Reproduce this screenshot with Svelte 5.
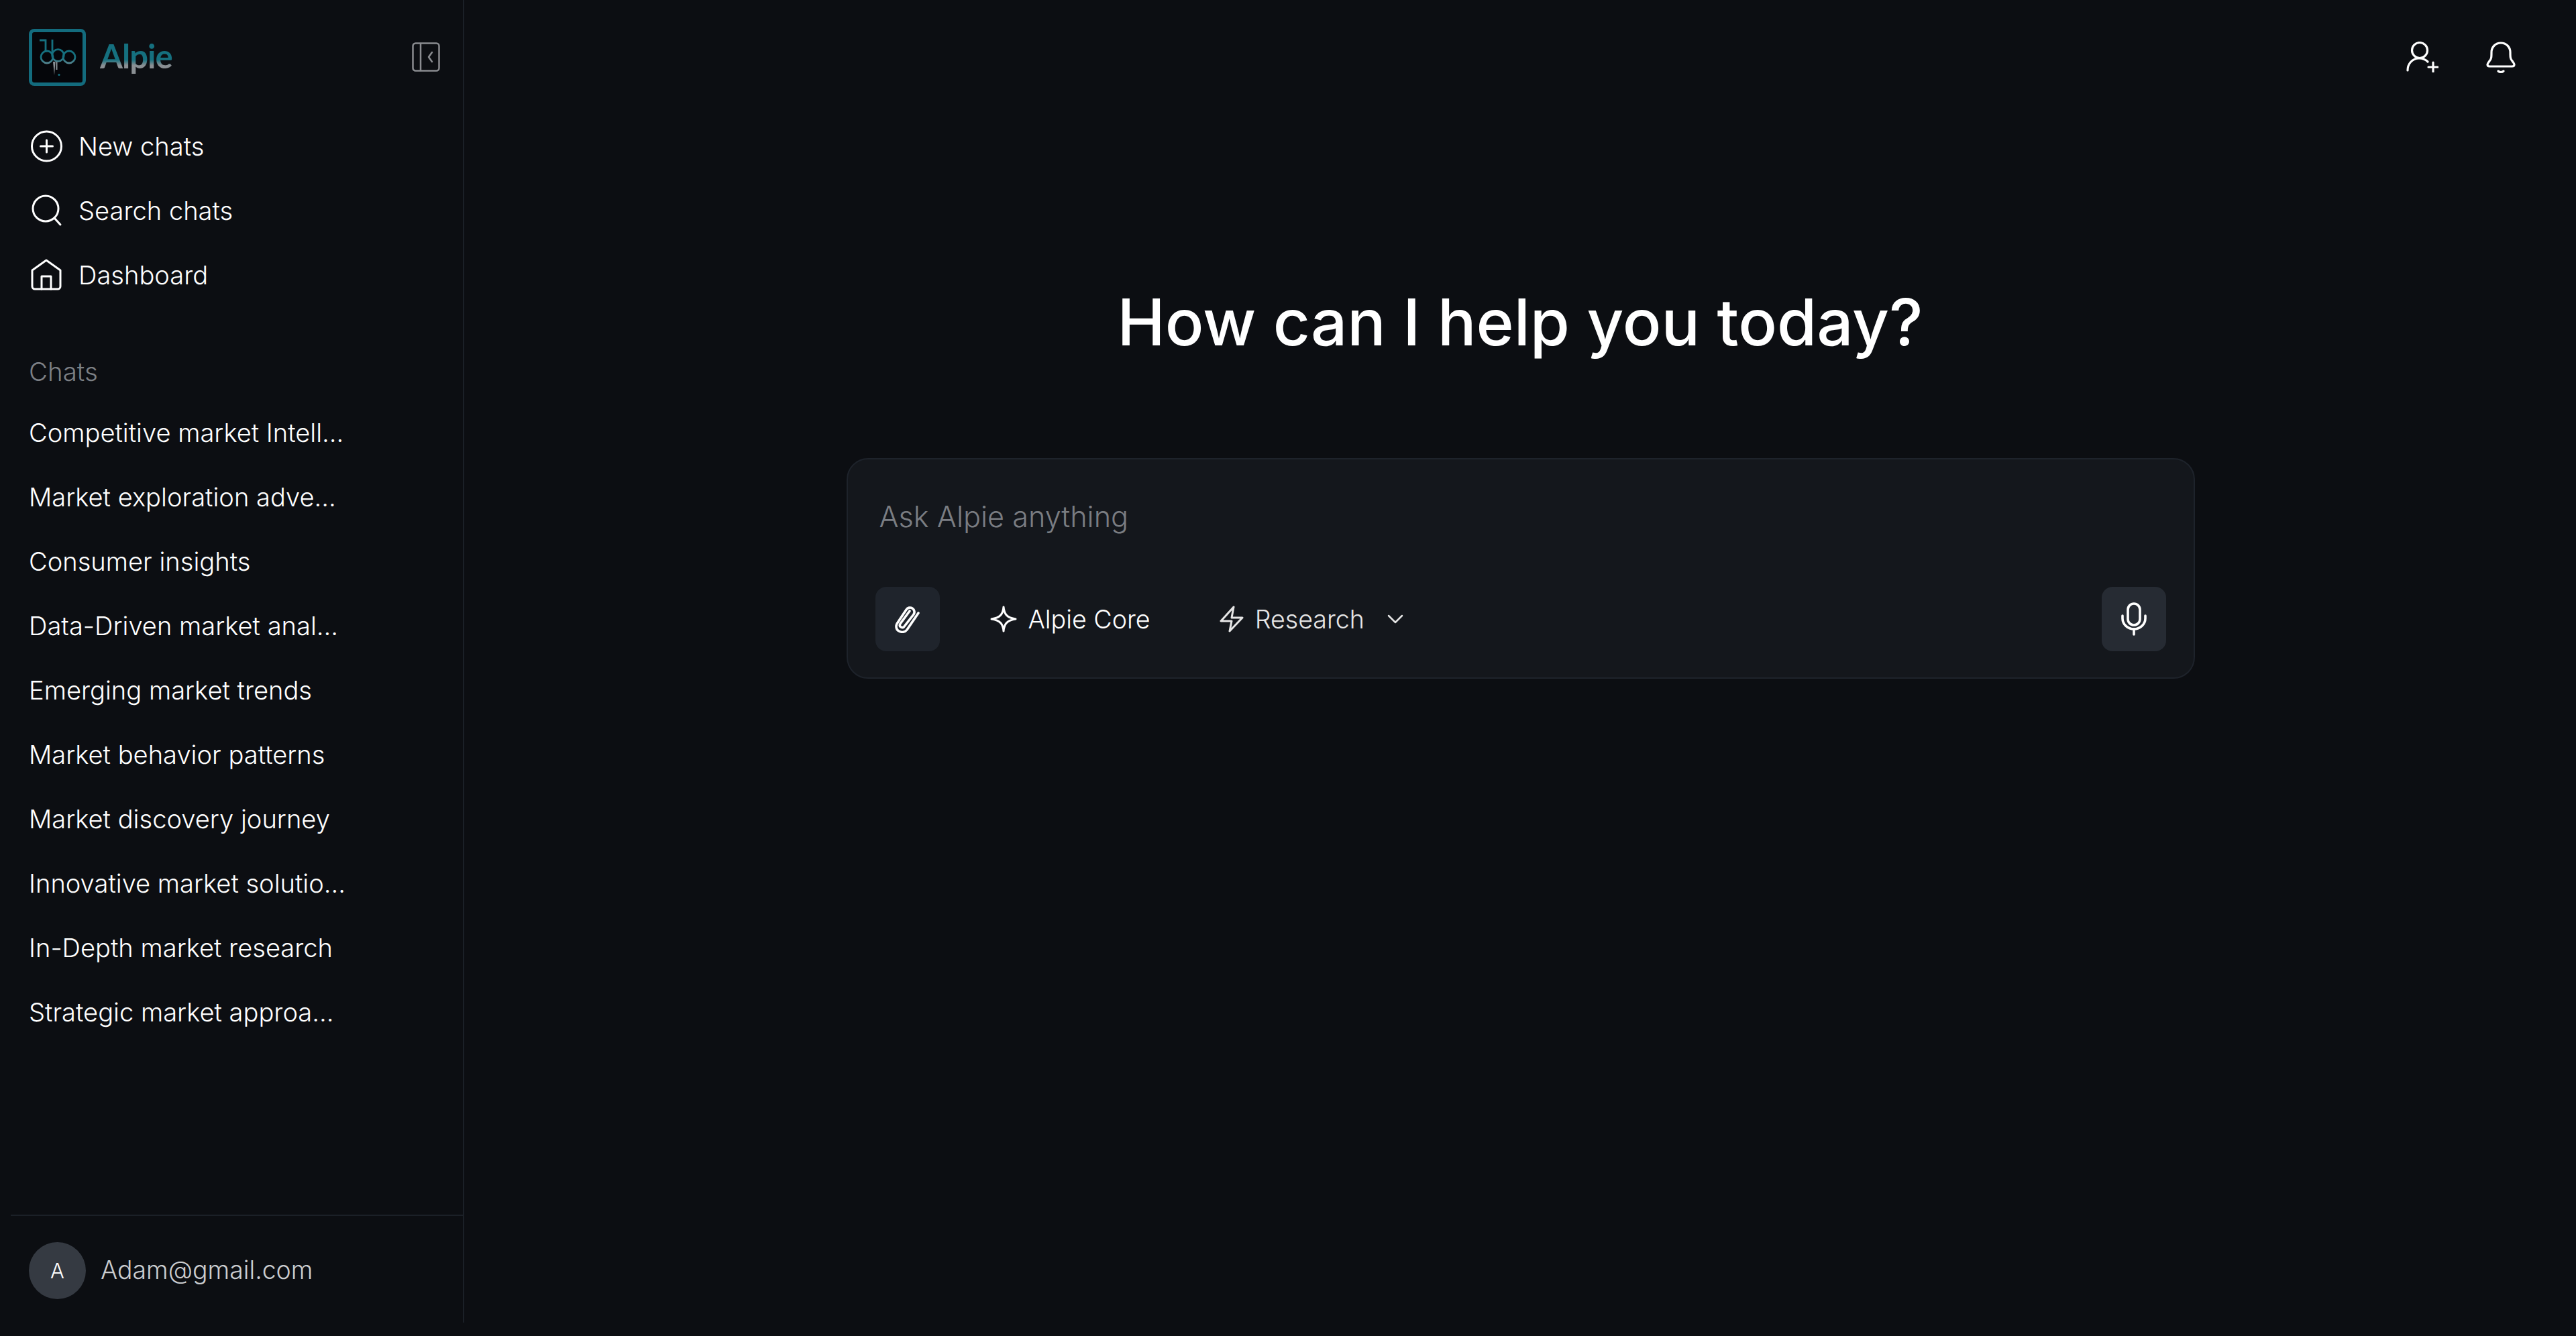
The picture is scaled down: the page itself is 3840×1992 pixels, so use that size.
<script>
  const navItems = [
    { label: 'New chats', icon: 'plus' },
    { label: 'Search chats', icon: 'search' },
    { label: 'Dashboard', icon: 'home' }
  ];

  const chats = [
    'Competitive market Intell...',
    'Market exploration adve...',
    'Consumer insights',
    'Data-Driven market anal...',
    'Emerging market trends',
    'Market behavior patterns',
    'Market discovery journey',
    'Innovative market solutio...',
    'In-Depth market research',
    'Strategic market approa...'
  ];
</script>

<div class="page">
  <aside class="sidebar">
    <div class="brand">
      <div class="logo-box">
        <svg viewBox="0 0 75 75" width="75" height="75" fill="none" stroke="url(#mark)" stroke-width="2.8">
          <defs>
            <linearGradient id="mark" gradientUnits="userSpaceOnUse" x1="0" y1="38" x2="0" y2="50">
              <stop offset="0" stop-color="#15707f" />
              <stop offset="1" stop-color="#6f8c95" />
            </linearGradient>
          </defs>
          <path d="M11 12h9v18" />
          <path d="M30 11v21" />
          <circle cx="22" cy="37" r="9" />
          <circle cx="38.5" cy="34.5" r="8.8" />
          <circle cx="55" cy="37" r="9" />
          <path d="M31 44l2 20 1.5-20" fill="#8b9296" stroke="none" />
          <path d="M36.5 44v12" stroke="#8b9296" stroke-width="2" />
          <circle cx="40" cy="63.5" r="1.6" fill="#15707f" stroke="none" />
        </svg>
      </div>
      <span class="brand-name">Alpie</span>
      <button class="collapse" aria-label="Collapse sidebar">
        <svg viewBox="0 0 42 44" width="42" height="44" fill="none" stroke="#8a8c90" stroke-width="2.5" stroke-linecap="round" stroke-linejoin="round">
          <rect x="1.5" y="1.5" width="39" height="41" rx="4" />
          <path d="M13 2v40" />
          <path d="M30 15l-5 7 5 7" />
        </svg>
      </button>
    </div>

    <nav class="nav">
      {#each navItems as item}
        <div class="row nav-row">
          <svg class="nav-icon" viewBox="0 0 48 48" width="48" height="48" fill="none" stroke="#fff" stroke-width="3" stroke-linecap="round" stroke-linejoin="round">
            {#if item.icon === 'plus'}
              <circle cx="24.5" cy="24" r="22" />
              <path d="M24.5 15v18M15.5 24h18" />
            {:else if item.icon === 'search'}
              <circle cx="23" cy="21" r="19" />
              <path d="M36 35l9 10" />
            {:else}
              <path d="M3 17L24 2l21 15v24a4 4 0 0 1-4 4H7a4 4 0 0 1-4-4z" />
              <path d="M17 45V26h14v19" />
            {/if}
          </svg>
          <span>{item.label}</span>
        </div>
      {/each}
    </nav>

    <div class="chats-label">Chats</div>
    <div class="chats">
      {#each chats as chat}
        <div class="row">{chat}</div>
      {/each}
    </div>

    <div class="account">
      <div class="avatar">A</div>
      <span class="email">Adam@gmail.com</span>
    </div>
  </aside>

  <main class="main">
    <header class="topbar">
      <svg viewBox="0 0 48 46" width="48" height="46" fill="none" stroke="#fff" stroke-width="3.2" stroke-linecap="round" stroke-linejoin="round">
        <circle cx="20" cy="13" r="11.5" />
        <path d="M2 43c0-10 7-18 17-18 6 0 10 2 13 5" />
        <path d="M40 31v14M33 38h14" />
      </svg>
      <svg viewBox="0 0 44 48" width="44" height="48" fill="none" stroke="#fff" stroke-width="3.2" stroke-linecap="round" stroke-linejoin="round">
        <path d="M2 34c0-1 1-2 3-5 3-3 3-6 3-13C8 8 14 2 22 2s14 6 14 14c0 7 0 10 3 13 2 3 3 4 3 5 0 2-1 3-3 3H5c-2 0-3-1-3-3z" />
        <path d="M18 44c2 2 6 2 8 0" />
      </svg>
    </header>

    <h1 class="title">How can I help you today?</h1>

    <section class="composer">
      <div class="placeholder">Ask Alpie anything</div>
      <div class="toolbar">
        <button class="square" aria-label="Attach">
          <svg viewBox="0 0 40 42" width="40" height="42" fill="none" stroke="#fff" stroke-width="3.6" stroke-linecap="round" stroke-linejoin="round">
            <path d="M36 12L19 37c-3 4-8 4-12 2s-5-7-3-11L18 7c2-3 6-4 9-2s4 6 2 9L15 32c-1 2-3 2-5 1s-2-3-1-5L23 9" />
          </svg>
        </button>
        <div class="tool core">
          <svg viewBox="0 0 40 40" width="40" height="40" fill="none" stroke="#fff" stroke-width="3" stroke-linejoin="round">
            <path d="M20 2c1 11 5 16 18 18-13 2-17 7-18 18-1-11-5-16-18-18 13-2 17-7 18-18z" />
          </svg>
          <span>Alpie Core</span>
        </div>
        <div class="tool research">
          <svg viewBox="0 0 36 40" width="36" height="40" fill="none" stroke="#e6e6e6" stroke-width="3" stroke-linecap="round" stroke-linejoin="round">
            <path d="M21 2L2 23h16l-3 15 19-20H18z" />
          </svg>
          <span>Research</span>
          <svg class="chev" viewBox="0 0 24 14" width="24" height="14" fill="none" stroke="#e6e6e6" stroke-width="2.5" stroke-linecap="round" stroke-linejoin="round">
            <path d="M2 2l10 10L22 2" />
          </svg>
        </div>
        <button class="square mic" aria-label="Voice">
          <svg viewBox="0 0 38 50" width="38" height="50" fill="none" stroke="#fff" stroke-width="3.6" stroke-linecap="round" stroke-linejoin="round">
            <rect x="10" y="2" width="18" height="32" rx="9" />
            <path d="M2 20v4c0 9 8 16 17 16s17-7 17-16v-4" />
            <path d="M19 40v8" />
          </svg>
        </button>
      </div>
    </section>
  </main>
</div>

<style>
  :global(body) {
    margin: 0;
    background: #0c0e12;
  }

  .page {
    display: flex;
    height: 1992px;
    overflow: hidden;
    font-family: Inter, "Liberation Sans", sans-serif;
    font-weight: 350;
    color: #fff;
    font-size: 38.1px;
  }

  .sidebar {
    box-sizing: border-box;
    width: 692px;
    height: 1972px;
    flex-shrink: 0;
    display: flex;
    flex-direction: column;
    border-right: 2px solid #1b2027;
  }

  .brand {
    height: 170px;
    display: flex;
    align-items: center;
    padding: 0 34px 0 43px;
  }

  .logo-box {
    box-sizing: border-box;
    width: 85px;
    height: 85px;
    border: 5px solid #136b7d;
    border-radius: 8px;
    background: #05060a;
    display: flex;
  }

  .brand-name {
    margin-left: 21px;
    margin-top: -5px;
    font-family: Lato, sans-serif;
    font-weight: 700;
    font-size: 49px;
    letter-spacing: -1px;
    line-height: 60px;
    background: linear-gradient(180deg, #15707f 0 60%, #8a8f93 74%);
    -webkit-background-clip: text;
    background-clip: text;
    color: transparent;
  }

  .collapse {
    margin-left: auto;
    padding: 0;
    background: none;
    border: none;
    display: flex;
  }

  .row {
    height: 96px;
    display: flex;
    align-items: center;
    padding-left: 43px;
    white-space: nowrap;
  }

  .nav-icon {
    margin-right: 24px;
    margin-left: 2px;
  }

  .chats-label {
    margin: 71px 0 18px 43px;
    line-height: 50px;
    font-size: 38.5px;
    color: #7d8085;
  }

  .account {
    margin: auto 0 0 16px;
    height: 161px;
    box-sizing: border-box;
    border-top: 2px solid #1b2027;
    padding: 39px 0 0 27px;
    display: flex;
    align-items: flex-start;
    gap: 22px;
  }

  .avatar {
    width: 85px;
    height: 85px;
    border-radius: 50%;
    background: #353a42;
    display: flex;
    align-items: center;
    justify-content: center;
    font-size: 31px;
  }

  .email {
    line-height: 83px;
    font-size: 37.4px;
    color: #cbcdd0;
  }

  .main {
    flex: 1;
    display: flex;
    flex-direction: column;
    align-items: center;
  }

  .topbar {
    align-self: stretch;
    height: 170px;
    display: flex;
    justify-content: flex-end;
    align-items: flex-start;
    gap: 71px;
    padding: 62px 90px 0 0;
    box-sizing: border-box;
  }

  .title {
    margin: 250px 0 143px;
    font-size: 95.7px;
    line-height: 120px;
    font-weight: 500;
  }

  .composer {
    box-sizing: border-box;
    width: 2010px;
    height: 329px;
    margin-left: 1px;
    background: #14171c;
    border: 2px solid #1e232b;
    border-radius: 32px;
    padding: 0 41px;
  }

  .placeholder {
    margin: 55px 0 0 6px;
    height: 60px;
    line-height: 60px;
    font-size: 43.2px;
    color: #7a7d82;
  }

  .toolbar {
    margin-top: 75px;
    display: flex;
    align-items: center;
  }

  .square {
    width: 96px;
    height: 96px;
    padding: 0;
    border: none;
    border-radius: 16px;
    background: #1f242c;
    display: flex;
    align-items: center;
    justify-content: center;
  }

  .mic {
    margin-left: auto;
    background: #262b33;
  }

  .tool {
    display: flex;
    align-items: center;
    gap: 17px;
    height: 94px;
    font-size: 37.6px;
  }

  .core {
    margin-left: 75px;
  }

  .research {
    margin-left: 103px;
    color: #e6e6e6;
  }

  .chev {
    margin-left: 17px;
  }
</style>
